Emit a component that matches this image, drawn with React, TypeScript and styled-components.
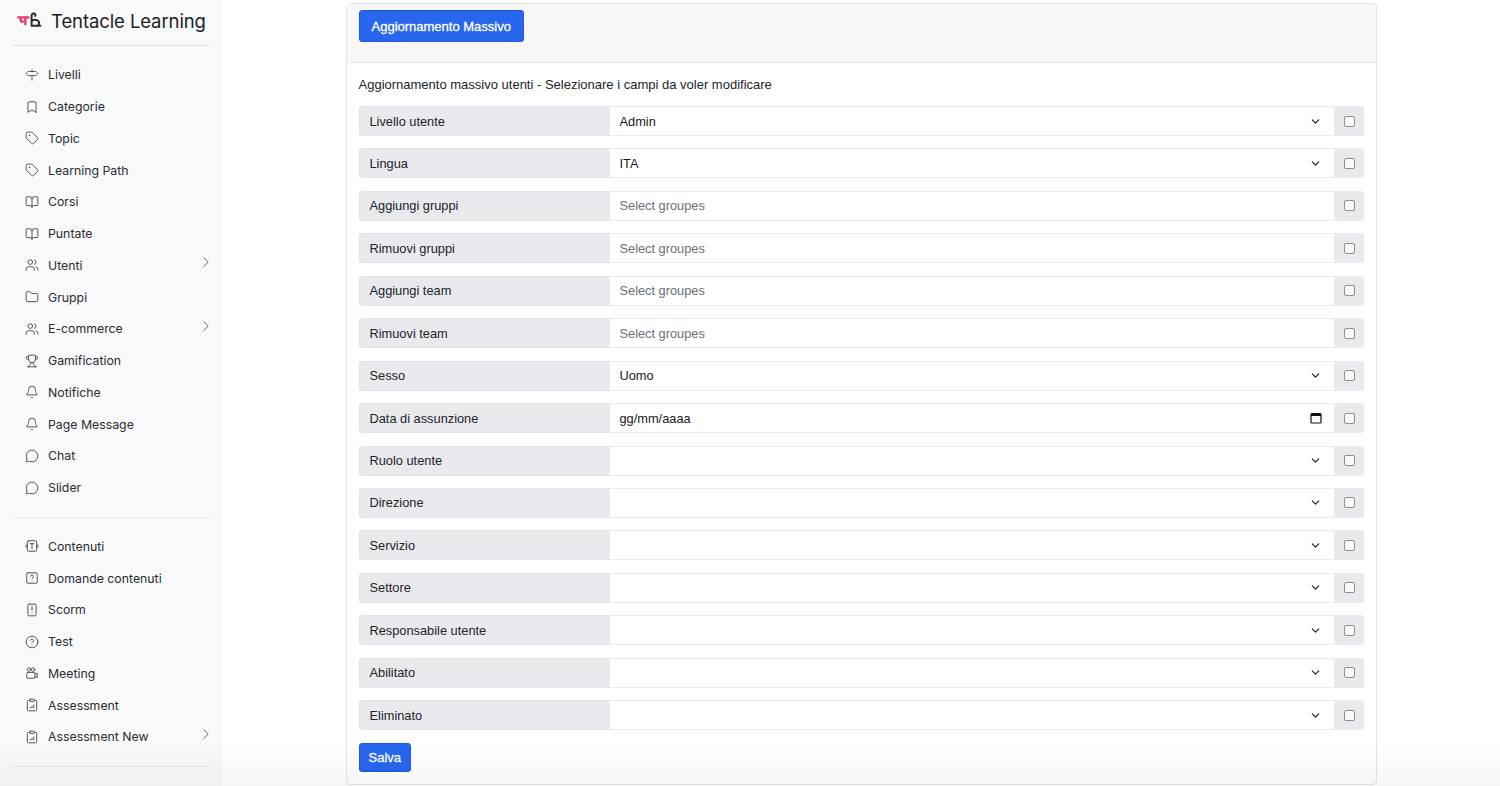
import React from 'react';
import styled, { createGlobalStyle } from 'styled-components';
import {
  Signpost,
  Bookmark,
  Tag,
  BookOpen,
  Users,
  Folder,
  Trophy,
  Bell,
  MessageCircle,
  CircleHelp,
  ChevronRight,
  ChevronDown,
} from 'lucide-react';

const GlobalStyle = createGlobalStyle`
  html, body {
    margin: 0;
    padding: 0;
    background: #ffffff;
  }
  body {
    font-family: Inter, "Liberation Sans", Arial, sans-serif;
    color: #212529;
  }
`;

const ContentIcon = () => (
  <svg width="14" height="14" viewBox="0 0 24 24" fill="none" stroke="currentColor" strokeWidth="1.6" strokeLinecap="round" strokeLinejoin="round">
    <rect x="4" y="3" width="16" height="18" rx="2" />
    <path d="M9 8h6M12 8v9M2 10v4M22 10v4" />
  </svg>
);

const QuestionSquare = () => (
  <svg width="14" height="14" viewBox="0 0 24 24" fill="none" stroke="currentColor" strokeWidth="1.6" strokeLinecap="round" strokeLinejoin="round">
    <rect x="3" y="3" width="18" height="18" rx="2" />
    <path d="M9.5 9a2.5 2.5 0 0 1 5 .5c0 1.7-2.5 2-2.5 3.5M12 17h.01" />
  </svg>
);

const ScormIcon = () => (
  <svg width="14" height="14" viewBox="0 0 24 24" fill="none" stroke="currentColor" strokeWidth="1.6" strokeLinecap="round" strokeLinejoin="round">
    <rect x="5" y="2" width="14" height="20" rx="2" />
    <path d="M12 6v7M12 17h.01" />
  </svg>
);

const MeetingIcon = () => (
  <svg width="14" height="14" viewBox="0 0 24 24" fill="none" stroke="currentColor" strokeWidth="1.6" strokeLinecap="round" strokeLinejoin="round">
    <circle cx="7" cy="6" r="3" />
    <circle cx="14" cy="6" r="3" />
    <rect x="3" y="11" width="14" height="10" rx="1.5" />
    <path d="M17 14l4-2v8l-4-2" />
  </svg>
);

const AssessmentIcon = () => (
  <svg width="14" height="14" viewBox="0 0 24 24" fill="none" stroke="currentColor" strokeWidth="1.6" strokeLinecap="round" strokeLinejoin="round">
    <rect x="8" y="2" width="8" height="4" rx="1" />
    <path d="M16 4h2a2 2 0 0 1 2 2v14a2 2 0 0 1-2 2H6a2 2 0 0 1-2-2V6a2 2 0 0 1 2-2h2" />
    <path d="M9 17v-1M12 17v-3M15 17v-5" />
  </svg>
);

const CalendarIcon = () => (
  <svg width="12" height="12" viewBox="0 0 12 12">
    <rect x="1" y="1.5" width="10" height="9.5" rx="1" fill="none" stroke="#111" strokeWidth="1.2" />
    <rect x="1" y="1.5" width="10" height="2.5" fill="#111" />
  </svg>
);

const Logo = () => (
  <svg width="25" height="17" viewBox="0 0 24 16" fill="none" strokeLinecap="round" strokeLinejoin="round">
    <path d="M1 5h10M8 5v6.5M3.5 5v2.5c0 1 .8 1.6 2 1.6" stroke="#e23a6d" strokeWidth="2.3" />
    <path d="M14 3.5v9.5h8.5M14 8.5c1.5-1.6 5-1.8 6.5 0 .9 1.1.8 3-.4 4.2M14 3.5c0-1.6 1.2-2.4 2.4-2.2 1.2.2 1.6 1.4 1 2.3" stroke="#2b2b2b" strokeWidth="1.9" />
  </svg>
);

type NavEntry = { label: string; icon: React.ReactNode; sub?: boolean };

const ic = { size: 14, strokeWidth: 1.6 };

const topNav: NavEntry[] = [
  { label: 'Livelli', icon: <Signpost {...ic} /> },
  { label: 'Categorie', icon: <Bookmark {...ic} /> },
  { label: 'Topic', icon: <Tag {...ic} /> },
  { label: 'Learning Path', icon: <Tag {...ic} /> },
  { label: 'Corsi', icon: <BookOpen {...ic} /> },
  { label: 'Puntate', icon: <BookOpen {...ic} /> },
  { label: 'Utenti', icon: <Users {...ic} />, sub: true },
  { label: 'Gruppi', icon: <Folder {...ic} /> },
  { label: 'E-commerce', icon: <Users {...ic} />, sub: true },
  { label: 'Gamification', icon: <Trophy {...ic} /> },
  { label: 'Notifiche', icon: <Bell {...ic} /> },
  { label: 'Page Message', icon: <Bell {...ic} /> },
  { label: 'Chat', icon: <MessageCircle {...ic} /> },
  { label: 'Slider', icon: <MessageCircle {...ic} /> },
];

const bottomNav: NavEntry[] = [
  { label: 'Contenuti', icon: <ContentIcon /> },
  { label: 'Domande contenuti', icon: <QuestionSquare /> },
  { label: 'Scorm', icon: <ScormIcon /> },
  { label: 'Test', icon: <CircleHelp {...ic} /> },
  { label: 'Meeting', icon: <MeetingIcon /> },
  { label: 'Assessment', icon: <AssessmentIcon /> },
  { label: 'Assessment New', icon: <AssessmentIcon />, sub: true },
];

type FieldKind = 'select' | 'multi' | 'date';
type FormRow = { label: string; value?: string; kind: FieldKind };

const rows: FormRow[] = [
  { label: 'Livello utente', value: 'Admin', kind: 'select' },
  { label: 'Lingua', value: 'ITA', kind: 'select' },
  { label: 'Aggiungi gruppi', kind: 'multi' },
  { label: 'Rimuovi gruppi', kind: 'multi' },
  { label: 'Aggiungi team', kind: 'multi' },
  { label: 'Rimuovi team', kind: 'multi' },
  { label: 'Sesso', value: 'Uomo', kind: 'select' },
  { label: 'Data di assunzione', value: 'gg/mm/aaaa', kind: 'date' },
  { label: 'Ruolo utente', kind: 'select' },
  { label: 'Direzione', kind: 'select' },
  { label: 'Servizio', kind: 'select' },
  { label: 'Settore', kind: 'select' },
  { label: 'Responsabile utente', kind: 'select' },
  { label: 'Abilitato', kind: 'select' },
  { label: 'Eliminato', kind: 'select' },
];

const NavGroup: React.FC<{ items: NavEntry[] }> = ({ items }) => (
  <NavList>
    {items.map((n) => (
      <NavItem key={n.label}>
        <NavIcon>{n.icon}</NavIcon>
        <NavLabel>{n.label}</NavLabel>
        {n.sub && (
          <Caret>
            <ChevronRight size={18} strokeWidth={1.2} />
          </Caret>
        )}
      </NavItem>
    ))}
  </NavList>
);

const App: React.FC = () => {
  return (
    <Layout>
      <GlobalStyle />
      <Sidebar>
        <Brand>
          <Logo />
          <BrandName>Tentacle Learning</BrandName>
        </Brand>
        <NavGroup items={topNav} />
        <NavDivider />
        <NavGroup items={bottomNav} />
        <NavDivider />
      </Sidebar>

      <Main>
        <Card>
          <CardHeader>
            <PrimaryButton>Aggiornamento Massivo</PrimaryButton>
          </CardHeader>
          <CardBody>
            <Intro>Aggiornamento massivo utenti - Selezionare i campi da voler modificare</Intro>
            <Rows>
              {rows.map((r) => (
                <InputGroup key={r.label}>
                  <GroupLabel>{r.label}</GroupLabel>
                  <Field>
                    <FieldText $placeholder={r.kind === 'multi'}>
                      {r.kind === 'multi' ? 'Select groupes' : r.value}
                    </FieldText>
                    {r.kind === 'select' && <ChevronDown size={13} strokeWidth={2.2} color="#222" />}
                    {r.kind === 'date' && <CalendarIcon />}
                  </Field>
                  <CheckAddon>
                    <CheckBox />
                  </CheckAddon>
                </InputGroup>
              ))}
            </Rows>
            <SaveButton>Salva</SaveButton>
          </CardBody>
        </Card>
      </Main>
      <BottomFade />
    </Layout>
  );
};

const Layout = styled.div`
  display: flex;
  height: 786px;
  overflow: hidden;
`;

const Sidebar = styled.aside`
  width: 222px;
  flex-shrink: 0;
  background: #f8f9fb;
  padding: 0 13px;
  box-sizing: border-box;
  font-family: Inter, "Liberation Sans", sans-serif;
`;

const Brand = styled.div`
  display: flex;
  align-items: center;
  gap: 9px;
  height: 46px;
  padding: 0 0 4px 4px;
  box-sizing: border-box;
  border-bottom: 1px solid #d9dbe0;
`;

const BrandName = styled.span`
  font-size: 18.5px;
  color: #1f2023;
  letter-spacing: -0.1px;
`;

const NavList = styled.ul`
  list-style: none;
  margin: 0;
  padding: 13px 0 0;
`;

const NavItem = styled.li`
  display: flex;
  align-items: center;
  height: 31.75px;
  padding-left: 12px;
  color: #2a2c30;
  font-size: 12.3px;
`;

const NavIcon = styled.span`
  display: inline-flex;
  width: 14px;
  margin-right: 9px;
  color: #4a4c52;
`;

const NavLabel = styled.span`
  flex: 1;
`;

const Caret = styled.span`
  display: inline-flex;
  color: #555;
  margin-right: -6px;
  margin-top: -6px;
`;

const NavDivider = styled.hr`
  border: 0;
  border-top: 1px solid #e6e8ec;
  margin: 13px 0 0;
`;

const Main = styled.main`
  flex: 1;
  display: flex;
  justify-content: center;
  padding-top: 3px;
  font-family: "Liberation Sans", Arial, sans-serif;
`;

const Card = styled.section`
  width: 1031px;
  align-self: flex-start;
  border: 1px solid #e4e5e7;
  border-radius: 4px;
  background: #fff;
  box-sizing: border-box;
`;

const CardHeader = styled.div`
  background: #f7f7f7;
  border-bottom: 1px solid #e8e8e8;
  padding: 6px 12px 0;
  height: 59px;
  box-sizing: border-box;
`;

const PrimaryButton = styled.button`
  height: 32px;
  padding: 0 12px;
  background: #2866ee;
  color: #fff;
  border: 1px solid #1f5ae0;
  border-radius: 3px;
  font-family: "Liberation Sans", Arial, sans-serif;
  font-size: 13px;
  font-weight: 400;
  -webkit-text-stroke: 0.3px #fff;
  cursor: pointer;
`;

const CardBody = styled.div`
  padding: 13px 12px 12px;
`;

const Intro = styled.p`
  margin: 0 0 13px;
  font-size: 13px;
  line-height: 17px;
  color: #212529;
`;

const Rows = styled.div`
  display: flex;
  flex-direction: column;
  gap: 12.45px;
`;

const InputGroup = styled.div`
  display: flex;
  height: 30px;
  width: 1005px;
`;

const GroupLabel = styled.div`
  width: 250px;
  box-sizing: border-box;
  display: flex;
  align-items: center;
  padding-left: 10px;
  background: #e9eaee;
  border: 1px solid #e3e4e8;
  border-right: 0;
  border-radius: 3px 0 0 3px;
  font-size: 12.8px;
  color: #212529;
`;

const Field = styled.div`
  flex: 1;
  display: flex;
  align-items: center;
  justify-content: space-between;
  padding: 0 12px 0 10px;
  border: 1px solid #ebecef;
  background: #fff;
  box-sizing: border-box;
`;

const FieldText = styled.span<{ $placeholder?: boolean }>`
  font-size: 12.8px;
  color: ${(p) => (p.$placeholder ? '#6c6f74' : '#1a1a1a')};
`;

const CheckAddon = styled.div`
  width: 29px;
  display: flex;
  align-items: center;
  justify-content: center;
  background: #e9eaee;
  border-radius: 0 3px 3px 0;
`;

const CheckBox = styled.span`
  width: 9px;
  height: 9px;
  border: 1px solid #8e8f93;
  border-radius: 2px;
  background: #fafafa;
`;

const SaveButton = styled.button`
  margin-top: 13px;
  height: 29px;
  padding: 0 9px;
  background: #2866ee;
  color: #fff;
  border: 1px solid #1f5ae0;
  border-radius: 3px;
  font-family: "Liberation Sans", Arial, sans-serif;
  font-size: 13px;
  font-weight: 400;
  -webkit-text-stroke: 0.3px #fff;
`;

const BottomFade = styled.div`
  position: fixed;
  left: 0;
  right: 0;
  bottom: 0;
  height: 44px;
  pointer-events: none;
  background: linear-gradient(to bottom, rgba(0, 0, 0, 0), rgba(0, 0, 0, 0.035));
`;

export default App;
